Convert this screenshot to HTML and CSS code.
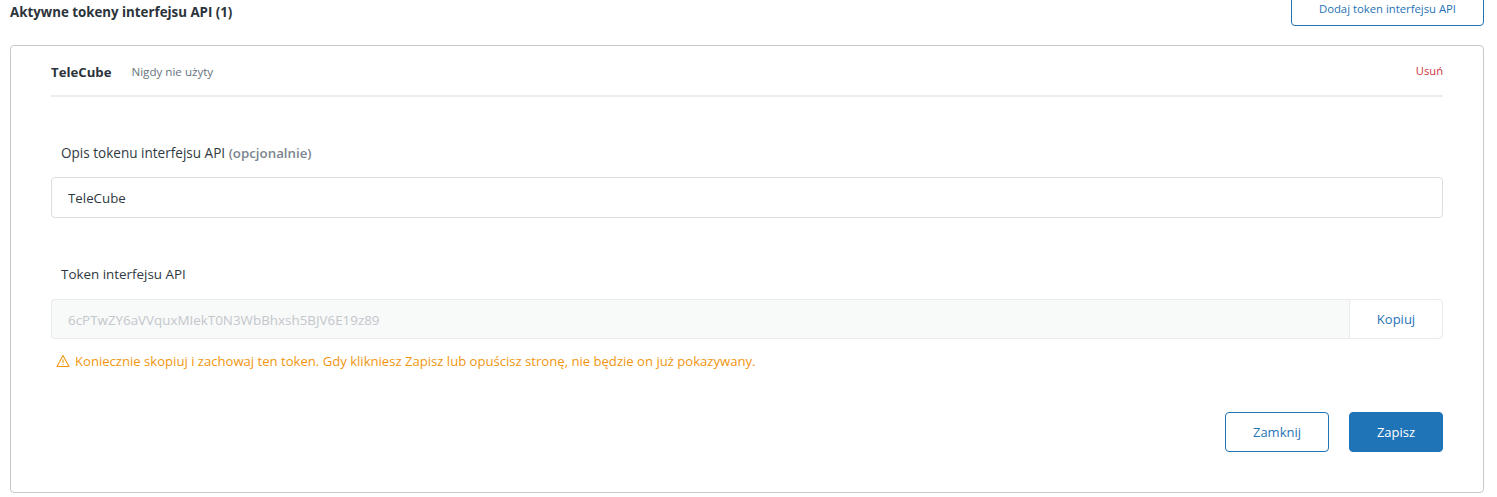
FILE: index.html
```html
<!DOCTYPE html>
<html lang="pl">
<head>
    <meta charset="UTF-8">
    <title>Tokeny interfejsu API</title>
    <link rel="stylesheet" href="styles.css">
</head>
<body>
    <div class="top-bar">
        <h2>Aktywne tokeny interfejsu API (1)</h2>
        <button class="btn btn-outline btn-add" type="button">Dodaj token interfejsu API</button>
    </div>

    <div class="card">
        <div class="token-head">
            <strong>TeleCube</strong>
            <span class="last-used">Nigdy nie użyty</span>
            <a class="remove" href="#">Usuń</a>
        </div>

        <form class="token-form">
            <label class="field-label" for="opis">Opis tokenu interfejsu API <span class="optional">(opcjonalnie)</span></label>
            <input class="field field-name" type="text" id="opis" value="TeleCube">

            <label class="field-label label-token" for="token">Token interfejsu API</label>
            <div class="token-group">
                <input class="field field-disabled" type="text" id="token" value="6cPTwZY6aVVquxMIekT0N3WbBhxsh5BJV6E19z89" disabled>
                <button class="copy" type="button">Kopiuj</button>
            </div>
            <p class="warning">
                <svg width="14" height="14" viewBox="0 0 14 14" fill="none" stroke="#f0960e" stroke-width="1.1">
                    <path d="M7 1.6 13 12.5H1Z" stroke-linejoin="round"/>
                    <path d="M7 5.4V9M7 10V11"/>
                </svg>
                Koniecznie skopiuj i zachowaj ten token. Gdy klikniesz Zapisz lub opuścisz stronę, nie będzie on już pokazywany.
            </p>

            <div class="actions">
                <button class="btn btn-outline btn-close" type="button">Zamknij</button>
                <button class="btn btn-primary" type="submit">Zapisz</button>
            </div>
        </form>
    </div>
</body>
</html>
```

FILE: styles.css
```css
* {
    box-sizing: border-box;
}
html, body {
    height: 497px;
    overflow: hidden;
}
body {
    margin: 0;
    padding: 0 13px 0 10px;
    background: #fff;
    color: #2b333b;
    font-family: "Open Sans", sans-serif;
    font-size: 13px;
}
.top-bar {
    display: flex;
    justify-content: space-between;
    align-items: flex-start;
    height: 55px;
    margin-top: -10px;
}
.top-bar h2 {
    margin: 0;
    padding-top: 13px;
    font-size: 13.3px;
    line-height: 18px;
    font-weight: 700;
}
.btn {
    height: 40px;
    border-radius: 4px;
    font-family: inherit;
    font-size: 13px;
    background: #fff;
}
.btn-outline {
    border: 1px solid #1f73b7;
    color: #1f73b7;
}
.btn-add {
    width: 193px;
    height: 36px;
    font-size: 11.3px;
}
.btn-primary {
    width: 94px;
    border: 1px solid #1f73b7;
    background: #1f73b7;
    color: #fff;
}
.card {
    height: 448px;
    padding: 0 40px;
    border: 1px solid #c8c8c8;
    border-radius: 4px;
}
.token-head {
    display: flex;
    align-items: center;
    height: 51px;
    padding-top: 2px;
    border-bottom: 2px solid #ececec;
}
.token-head strong {
    font-size: 13.2px;
}
.last-used {
    margin-left: 20px;
    font-size: 11.6px;
    color: #68737d;
}
.remove {
    margin-left: auto;
    margin-bottom: 3px;
    font-size: 11.2px;
    color: #cc3340;
    text-decoration: none;
}
.token-form {
    display: flex;
    flex-direction: column;
}
.field-label {
    margin: 47px 0 15px 10px;
    line-height: 18px;
    font-size: 13.55px;
    font-weight: 500;
    color: #2f3941;
}
.label-token {
    margin-top: 47px;
    margin-bottom: 16px;
    font-size: 13.4px;
}
.optional {
    font-weight: 600;
    font-size: 13.3px;
    color: #7b858d;
}
.field {
    width: 100%;
    height: 40px;
    padding: 1px 16px 0;
    border: 1px solid #dcdfe1;
    border-radius: 4px;
    font-family: inherit;
    font-size: 13.3px;
    color: #2f3941;
}
.field-name {
    height: 41px;
}
.token-group {
    display: flex;
}
.field-disabled {
    flex: 1;
    border-color: #e9ebed;
    border-right: none;
    border-radius: 4px 0 0 4px;
    background: #f8f9f9;
    font-size: 13.4px;
    color: #c2c8cc;
}
.copy {
    width: 94px;
    height: 40px;
    border: 1px solid #e9ebed;
    border-radius: 0 4px 4px 0;
    background: #fff;
    font-family: inherit;
    font-size: 13px;
    color: #1f73b7;
}
.warning {
    display: flex;
    align-items: center;
    gap: 5px;
    margin: 13px 0 0 5px;
    line-height: 18px;
    font-size: 13.1px;
    color: #f0960e;
}
.actions {
    display: flex;
    justify-content: flex-end;
    gap: 20px;
    margin-top: 42px;
}
.btn-close {
    width: 104px;
}
```
